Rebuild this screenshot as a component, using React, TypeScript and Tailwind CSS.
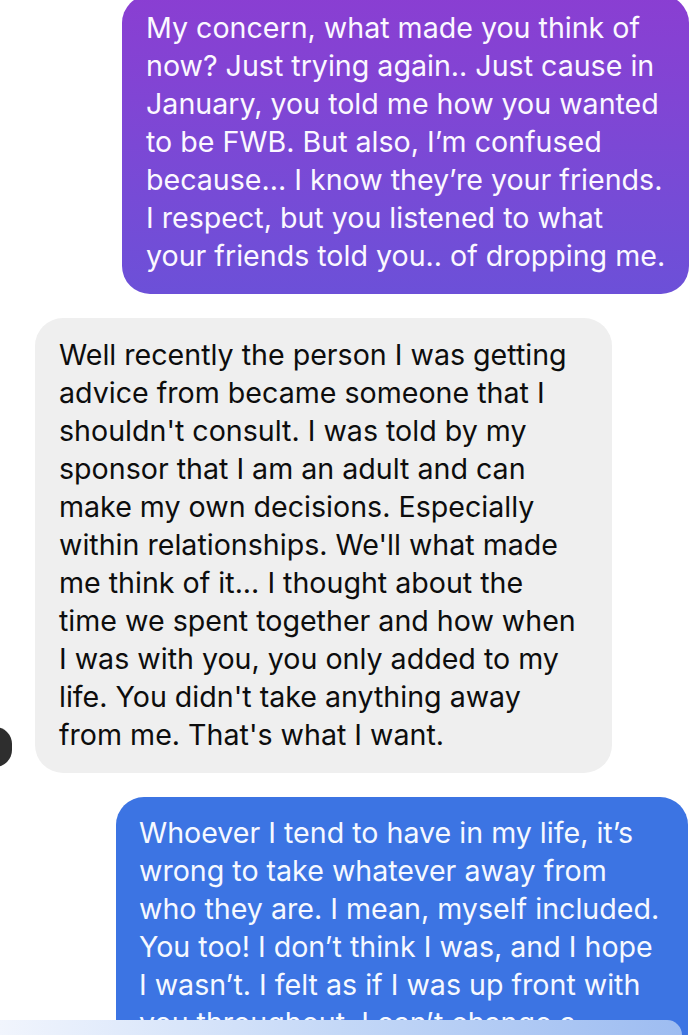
const purpleLines = [
  'My concern, what made you think of',
  'now? Just trying again.. Just cause in',
  'January, you told me how you wanted',
  'to be FWB. But also, I’m confused',
  'because... I know they’re your friends.',
  'I respect, but you listened to what',
  'your friends told you.. of dropping me.',
]

const greyLines = [
  'Well recently the person I was getting',
  'advice from became someone that I',
  "shouldn't consult. I was told by my",
  'sponsor that I am an adult and can',
  'make my own decisions. Especially',
  "within relationships. We'll what made",
  'me think of it... I thought about the',
  'time we spent together and how when',
  'I was with you, you only added to my',
  "life. You didn't take anything away",
  "from me. That's what I want.",
]

const blueLines = [
  'Whoever I tend to have in my life, it’s',
  'wrong to take whatever away from',
  'who they are. I mean, myself included.',
  'You too! I don’t think I was, and I hope',
  'I wasn’t. I felt as if I was up front with',
  'you throughout. I can’t change a',
]

function Lines({ lines }: { lines: string[] }) {
  return (
    <>
      {lines.map((l, i) => (
        <div key={i} className="whitespace-nowrap">
          {l}
        </div>
      ))}
    </>
  )
}

export default function App() {
  return (
    <div
      className="relative h-[1035px] w-[690px] overflow-hidden bg-white text-[28.6px] leading-[38px]"
      style={{ fontFamily: 'Inter, "Noto Sans", sans-serif' }}
    >
      <div className="flex flex-col">
        {/* outgoing, purple */}
        <div className="-mt-[5px] ml-[122px] mr-[1px] rounded-[28px] bg-gradient-to-b from-[#8a3ed2] to-[#6c50d8] pb-[19px] pl-[24px] pt-[14px] text-[#fbf8ff]">
          <Lines lines={purpleLines} />
        </div>

        {/* incoming, grey */}
        <div className="mt-[24px] flex items-end">
          <div className="mb-[6px] -ml-[22px] h-[40px] w-[34px] shrink-0 rounded-full bg-[#2e2e2e]" />
          <div className="ml-[23px] w-[577px] rounded-[28px] bg-[#efefef] pb-[19px] pl-[24px] pt-[18px] text-[#0d0d0d]">
            <Lines lines={greyLines} />
          </div>
        </div>

        {/* outgoing, blue */}
        <div className="ml-[116px] mr-[2px] mt-[24px] rounded-[28px] bg-[#3c74e3] pb-[19px] pl-[23px] pt-[17px] text-[#f6f9ff]">
          <Lines lines={blueLines} />
        </div>
      </div>

      {/* composer strip over the bottom */}
      <div className="absolute bottom-0 left-0 h-[15px] w-[682px] rounded-tr-[20px] bg-gradient-to-r from-[#f1f5fd] via-[#c4d8f7] to-[#9dbcf1]" />
    </div>
  )
}
